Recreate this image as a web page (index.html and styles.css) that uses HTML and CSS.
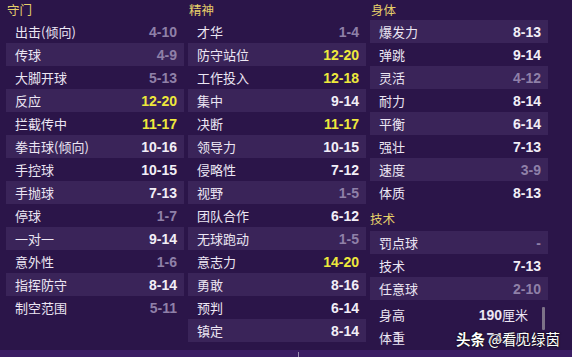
FILE: index.html
```html
<!DOCTYPE html>
<html lang="zh">
<head>
<meta charset="utf-8">
<link rel="stylesheet" href="styles.css">
</head>
<body>
<div class="page">
  <main class="grid">
    <section class="col">
      <div class="head">守门</div>
      <div class="row"><span class="lbl">出击(倾向)</span><span class="val low">4-10</span></div>
      <div class="row"><span class="lbl">传球</span><span class="val low">4-9</span></div>
      <div class="row"><span class="lbl">大脚开球</span><span class="val low">5-13</span></div>
      <div class="row"><span class="lbl">反应</span><span class="val high">12-20</span></div>
      <div class="row"><span class="lbl">拦截传中</span><span class="val high">11-17</span></div>
      <div class="row"><span class="lbl">拳击球(倾向)</span><span class="val">10-16</span></div>
      <div class="row"><span class="lbl">手控球</span><span class="val">10-15</span></div>
      <div class="row"><span class="lbl">手抛球</span><span class="val">7-13</span></div>
      <div class="row"><span class="lbl">停球</span><span class="val low">1-7</span></div>
      <div class="row"><span class="lbl">一对一</span><span class="val">9-14</span></div>
      <div class="row"><span class="lbl">意外性</span><span class="val low">1-6</span></div>
      <div class="row"><span class="lbl">指挥防守</span><span class="val">8-14</span></div>
      <div class="row"><span class="lbl">制空范围</span><span class="val low">5-11</span></div>
    </section>
    <section class="col">
      <div class="head">精神</div>
      <div class="row"><span class="lbl">才华</span><span class="val low">1-4</span></div>
      <div class="row"><span class="lbl">防守站位</span><span class="val high">12-20</span></div>
      <div class="row"><span class="lbl">工作投入</span><span class="val high">12-18</span></div>
      <div class="row"><span class="lbl">集中</span><span class="val">9-14</span></div>
      <div class="row"><span class="lbl">决断</span><span class="val high">11-17</span></div>
      <div class="row"><span class="lbl">领导力</span><span class="val">10-15</span></div>
      <div class="row"><span class="lbl">侵略性</span><span class="val">7-12</span></div>
      <div class="row"><span class="lbl">视野</span><span class="val low">1-5</span></div>
      <div class="row"><span class="lbl">团队合作</span><span class="val">6-12</span></div>
      <div class="row"><span class="lbl">无球跑动</span><span class="val low">1-5</span></div>
      <div class="row"><span class="lbl">意志力</span><span class="val high">14-20</span></div>
      <div class="row"><span class="lbl">勇敢</span><span class="val">8-16</span></div>
      <div class="row"><span class="lbl">预判</span><span class="val">6-14</span></div>
      <div class="row"><span class="lbl">镇定</span><span class="val">8-14</span></div>
    </section>
    <section class="col">
      <div class="head">身体</div>
      <div class="group">
        <div class="row"><span class="lbl">爆发力</span><span class="val">8-13</span></div>
        <div class="row"><span class="lbl">弹跳</span><span class="val">9-14</span></div>
        <div class="row"><span class="lbl">灵活</span><span class="val low">4-12</span></div>
        <div class="row"><span class="lbl">耐力</span><span class="val">8-14</span></div>
        <div class="row"><span class="lbl">平衡</span><span class="val">6-14</span></div>
        <div class="row"><span class="lbl">强壮</span><span class="val">7-13</span></div>
        <div class="row"><span class="lbl">速度</span><span class="val low">3-9</span></div>
        <div class="row"><span class="lbl">体质</span><span class="val">8-13</span></div>
      </div>
      <div class="head sub">技术</div>
      <div class="group">
        <div class="row"><span class="lbl">罚点球</span><span class="val low">-</span></div>
        <div class="row"><span class="lbl">技术</span><span class="val">7-13</span></div>
        <div class="row"><span class="lbl">任意球</span><span class="val low">2-10</span></div>
      </div>
      <div class="info">
        <div class="info-rows">
          <div class="irow"><span class="lbl">身高</span><span class="ival"><b>190</b>厘米</span></div>
          <div class="irow"><span class="lbl">体重</span><span class="ival"><b>74</b>公斤</span></div>
        </div>
        <div class="scroll"><div class="thumb"></div></div>
      </div>
    </section>
  </main>
  <footer class="band"><span class="tick"></span></footer>
  <div class="watermark"><b>头条</b> @看见绿茵</div>
</div>
</body>
</html>
```

FILE: styles.css
```css
* { box-sizing: border-box; }
html, body {
  margin: 0;
  padding: 0;
  background: #2b1549;
}
.page {
  position: relative;
  width: 572px;
  height: 357px;
  overflow: hidden;
  display: flex;
  flex-direction: column;
  font-family: "Noto Sans CJK SC", "Noto Sans", sans-serif;
}
.grid {
  height: 350px;
  display: grid;
  grid-template-columns: 178px 178px 178px;
  column-gap: 4px;
  padding-left: 6px;
}
.col {
  display: flex;
  flex-direction: column;
}
.head {
  height: 20px;
  line-height: 19px;
  font-size: 12.5px;
  color: #e6cf6a;
  padding-left: 1px;
}
.head.sub {
  height: 27px;
  line-height: 30px;
  margin-left: -1px;
}
.row {
  height: 23px;
  display: flex;
  align-items: center;
  justify-content: space-between;
  padding: 0 7px 0 9px;
}
.col > .row:nth-of-type(odd),
.group > .row:nth-child(odd) {
  background: #3a2459;
}
.lbl {
  font-size: 13px;
  color: #ece6f3;
  line-height: 1;
}
.val {
  font-family: "Liberation Sans", Arial, sans-serif;
  font-weight: bold;
  font-size: 14px;
  color: #f2eef7;
  line-height: 1;
}
.val.low { color: #8f80a8; }
.val.high { color: #eee83c; }
.info {
  margin-top: 3px;
  display: flex;
}
.info-rows {
  flex: 1;
  display: flex;
  flex-direction: column;
}
.irow {
  height: 23px;
  display: flex;
  align-items: center;
  justify-content: space-between;
  padding: 0 14px 0 9px;
}
.ival {
  font-size: 13px;
  color: #ece6f3;
  line-height: 1;
}
.ival b {
  font-family: "Liberation Sans", Arial, sans-serif;
  font-size: 14px;
}
.scroll {
  width: 6px;
  padding-top: 4px;
}
.thumb {
  width: 3px;
  height: 23px;
  background: #7d7288;
  border-radius: 1px;
}
.band {
  height: 7px;
  background: #3a1d63;
  padding-left: 298px;
  display: flex;
  align-items: flex-end;
}
.tick {
  width: 1px;
  height: 5px;
  background: #9b8fb0;
}
.watermark {
  position: absolute;
  left: 456px;
  top: 328px;
  font-size: 14.5px;
  color: #ffffff;
  text-shadow: 0 0 2px #000, 0 0 1px #000;
  white-space: nowrap;
}
.watermark b { font-weight: bold; }
```
